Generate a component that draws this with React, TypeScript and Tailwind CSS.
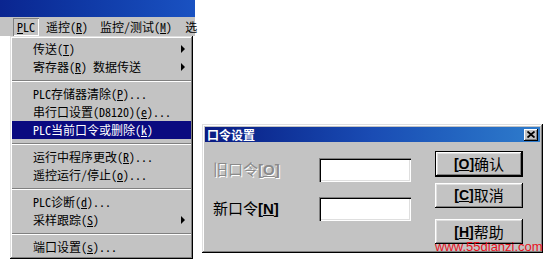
import React from "react";

const menuFont = {
  fontFamily: '"Noto Sans Mono CJK SC", "Noto Sans CJK SC", sans-serif',
};

function U({ children }: { children: React.ReactNode }) {
  return <span className="underline underline-offset-[1px]">{children}</span>;
}

function Arrow() {
  return (
    <div className="absolute right-[6px] top-1/2 -translate-y-1/2 w-0 h-0 border-y-[4px] border-y-transparent border-l-[4px] border-l-black" />
  );
}

function Item({
  children,
  arrow,
  active,
}: {
  children: React.ReactNode;
  arrow?: boolean;
  active?: boolean;
}) {
  return (
    <div
      className={
        "relative h-[18px] pl-[21px] flex items-center whitespace-nowrap text-[12px] leading-none " +
        (active ? "bg-[#0a0a80] text-white" : "text-black")
      }
    >
      {children}
      {arrow && <Arrow />}
    </div>
  );
}

function Sep() {
  return (
    <div className="h-[9px] flex items-center">
      <div className="w-full h-[2px] border-t border-t-[#808080] border-b border-b-white" />
    </div>
  );
}

function Btn({
  children,
  isDefault,
}: {
  children: React.ReactNode;
  isDefault?: boolean;
}) {
  return (
    <div
      className={
        "w-[88px] flex items-center justify-center bg-[#c3c3c3] text-[15px] text-black " +
        (isDefault
          ? "h-[26px] border border-black shadow-[inset_-1px_-1px_#000,inset_1px_1px_#fff,inset_-2px_-2px_#808080,inset_2px_2px_#dfdfdf]"
          : "h-[25px] shadow-[inset_-1px_-1px_#000,inset_1px_1px_#fff,inset_-2px_-2px_#808080,inset_2px_2px_#dfdfdf]")
      }
    >
      {children}
    </div>
  );
}

export default function App() {
  return (
    <div
      className="relative w-[550px] h-[259px] bg-white overflow-hidden"
      style={menuFont}
    >
      <div className="w-[195px] flex flex-col">
        <div className="h-[17px] bg-linear-to-r from-[#0a2590] to-[#1a52c2]" />
        <div className="h-[19px] bg-[#c3c3c3] flex items-center text-[12px] leading-none text-black whitespace-nowrap">
          <div className="ml-[13px] h-[18px] px-[4px] flex items-center shadow-[inset_1px_1px_#808080,inset_-1px_-1px_#fff]">
            <U>P</U>LC
          </div>
          <div className="px-[6px] ml-[1px]">
            遥控(<U>R</U>)
          </div>
          <div className="px-[6px]">
            监控/测试(<U>M</U>)
          </div>
          <div className="pl-[7px]">选</div>
        </div>
        <div className="ml-[10px] w-[183px] bg-[#c3c3c3] px-[2px] pt-[4px] pb-[3px] shadow-[inset_-1px_-1px_#000,inset_1px_1px_#dfdfdf,inset_-2px_-2px_#808080,inset_2px_2px_#fff]">
          <Item arrow>
            传送(<U>T</U>)
          </Item>
          <Item arrow>
            寄存器(<U>R</U>) 数据传送
          </Item>
          <Sep />
          <Item>
            PLC存储器清除(<U>P</U>)...
          </Item>
          <Item>
            串行口设置(D8120)(<U>e</U>)...
          </Item>
          <Item active>
            PLC当前口令或删除(<U>k</U>)
          </Item>
          <Sep />
          <Item>
            运行中程序更改(<U>R</U>)...
          </Item>
          <Item>
            遥控运行/停止(<U>o</U>)...
          </Item>
          <Sep />
          <Item>
            PLC诊断(<U>d</U>)...
          </Item>
          <Item arrow>
            采样跟踪(<U>S</U>)
          </Item>
          <Sep />
          <Item>
            端口设置(<U>s</U>)...
          </Item>
        </div>
      </div>

      {/* dialog window */}
      <div className="absolute left-[202px] top-[124px] w-[341px] h-[129px] bg-[#c3c3c3] p-[3px] flex flex-col shadow-[inset_-1px_-1px_#000,inset_1px_1px_#dfdfdf,inset_-2px_-2px_#808080,inset_2px_2px_#fff]">
        <div className="h-[15px] bg-linear-to-r from-[#0a1a82] via-[#1a4cb4] to-[#2f7ccc] flex items-center justify-between">
          <span
            className="pl-[2px] text-[12px] leading-none font-bold text-white"
            style={{ fontFamily: '"Noto Sans CJK SC", sans-serif' }}
          >
            口令设置
          </span>
          <div className="mr-[2px] w-[14px] h-[12px] bg-[#c3c3c3] flex items-center justify-center shadow-[inset_-1px_-1px_#000,inset_1px_1px_#fff,inset_-2px_-2px_#808080]">
            <svg width="8" height="7" viewBox="0 0 8 7">
              <path d="M0.5 0.5 L7.5 6.5 M7.5 0.5 L0.5 6.5" stroke="#000" strokeWidth="1.8" />
            </svg>
          </div>
        </div>
        <div
          className="flex flex-row"
          style={{ fontFamily: '"Noto Sans CJK SC", sans-serif' }}
        >
          <div className="pl-[8px] pt-[16px] flex flex-col gap-[15px]">
            <div className="h-[24px] flex items-center">
              <div className="w-[106px] text-[15px] text-[#8a8a8a] [text-shadow:1px_1px_0_#ffffff] whitespace-nowrap">
                旧口令
                <span className="font-bold" style={{ fontFamily: '"Liberation Sans", sans-serif' }}>
                  [<U>O</U>]
                </span>
              </div>
              <div className="w-[92px] h-[24px] bg-white shadow-[inset_1px_1px_#808080,inset_2px_2px_#000,inset_-1px_-1px_#fff,inset_-2px_-2px_#dfdfdf]" />
            </div>
            <div className="h-[24px] flex items-center">
              <div className="w-[106px] text-[15px] text-black whitespace-nowrap">
                新口令
                <span className="font-bold" style={{ fontFamily: '"Liberation Sans", sans-serif' }}>
                  [<U>N</U>]
                </span>
              </div>
              <div className="w-[92px] h-[24px] bg-white shadow-[inset_1px_1px_#808080,inset_2px_2px_#000,inset_-1px_-1px_#fff,inset_-2px_-2px_#dfdfdf]" />
            </div>
          </div>
          <div className="ml-[24px] pt-[9px] flex flex-col">
            <Btn isDefault>
              <span className="font-bold text-[14px]" style={{ fontFamily: '"Liberation Sans", sans-serif' }}>
                [<U>O</U>]
              </span>
              确认
            </Btn>
            <div className="h-[6px]" />
            <Btn>
              <span className="font-bold text-[14px]" style={{ fontFamily: '"Liberation Sans", sans-serif' }}>
                [<U>C</U>]
              </span>
              取消
            </Btn>
            <div className="h-[11px]" />
            <Btn>
              <span className="font-bold text-[14px] leading-none" style={{ fontFamily: '"Liberation Sans", sans-serif' }}>
                [<U>H</U>]
              </span>
              <span className="leading-none">帮助</span>
            </Btn>
          </div>
        </div>
      </div>

      {/* watermark */}
      <div
        className="absolute left-[435px] top-[240px] text-[13px] leading-none text-[#e8121e] whitespace-nowrap"
        style={{ fontFamily: '"Liberation Sans", sans-serif' }}
      >
        www.55dianzi.com
      </div>
    </div>
  );
}
